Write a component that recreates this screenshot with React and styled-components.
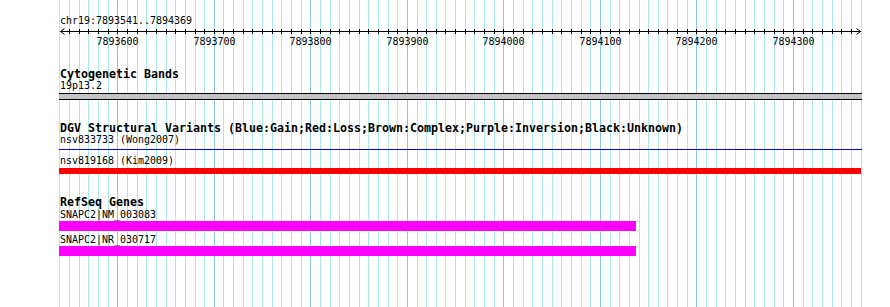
import React from 'react';
import styled, { createGlobalStyle } from 'styled-components';

const GlobalStyle = createGlobalStyle`
  html, body { margin: 0; padding: 0; background: #ffffff; }
  body { font-family: "DejaVu Sans Mono", "Liberation Mono", monospace; }
`;

const START = 7893540;
const STEPS = 84;
const xAt = (i) => Math.round(59.4 + i * 9.652);

const Panel = styled.div`
  position: relative;
  width: 890px;
  height: 307px;
  overflow: hidden;
  background: #ffffff;
  color: #000000;
`;

const GridLayer = styled.svg`
  position: absolute;
  left: 0;
  top: 0;
  width: 890px;
  height: 307px;
  z-index: 0;
`;

const Content = styled.div`
  position: relative;
  z-index: 1;
  display: flex;
  flex-direction: column;
  padding-top: 15px;
`;

const ChrLabel = styled.div`
  font-size: 9.97px;
  line-height: 12px;
  height: 12px;
  padding-left: 60px;
  white-space: pre;
`;

const RulerSvg = styled.svg`
  display: block;
  width: 890px;
  height: 19px;
  font-family: "DejaVu Sans Mono", "Liberation Mono", monospace;
  font-size: 9.97px;
`;

const TrackList = styled.div`
  display: flex;
  flex-direction: column;
  padding-left: 59px;
`;

const Track = styled.section`
  display: flex;
  flex-direction: column;
  margin-top: 22px;
`;

const TrackTitle = styled.div`
  font-weight: bold;
  font-size: 11.63px;
  line-height: 12px;
  height: 12px;
  padding-left: 1px;
  white-space: pre;
`;

const Feature = styled.div`
  display: flex;
  flex-direction: column;
  margin-top: ${(p) => p.$mt}px;
`;

const FeatureLabel = styled.div`
  position: relative;
  z-index: 2;
  font-size: 9.97px;
  line-height: 12px;
  height: 12px;
  padding-left: 1px;
  white-space: pre;
`;

const Bar = styled.div`
  box-sizing: border-box;
  height: ${(p) => p.$h}px;
  margin-top: ${(p) => p.$gap}px;
  background: ${(p) => p.$color};
  border-top: ${(p) => (p.$outline ? '1px solid #000' : 'none')};
  border-bottom: ${(p) => (p.$outline ? '1px solid #000' : 'none')};
`;

const tracks = [
  {
    title: 'Cytogenetic Bands',
    features: [
      { label: '19p13.2', color: '#c6c3c6', h: 7, w: 803, outline: true, mt: 0, gap: 1 },
    ],
  },
  {
    title:
      'DGV Structural Variants (Blue:Gain;Red:Loss;Brown:Complex;Purple:Inversion;Black:Unknown)',
    features: [
      { label: 'nsv833733 (Wong2007)', color: '#0000cc', h: 1, w: 803, mt: 0, gap: 3 },
      { label: 'nsv819168 (Kim2009)', color: '#ff0000', h: 6, w: 802, mt: 5, gap: 1 },
    ],
  },
  {
    title: 'RefSeq Genes',
    features: [
      { label: 'SNAPC2|NM_003083', color: '#ff00ff', h: 10, w: 577, mt: 1, gap: 0 },
      { label: 'SNAPC2|NR_030717', color: '#ff00ff', h: 10, w: 577, mt: 3, gap: 0 },
    ],
  },
];

function Grid() {
  const lines = [];
  for (let i = 0; i < STEPS; i++) {
    const pos = START + i * 10;
    const major = pos % 100 === 0;
    lines.push(
      <rect
        key={i}
        x={xAt(i)}
        y={0}
        width={1}
        height={307}
        fill={major ? '#87c7ea' : '#a9e9ef'}
      />
    );
  }
  return (
    <GridLayer viewBox="0 0 890 307" shapeRendering="crispEdges">
      {lines}
    </GridLayer>
  );
}

function Ruler() {
  const ticks = [];
  const labels = [];
  for (let i = 1; i < STEPS - 1; i++) {
    const pos = START + i * 10;
    const x = xAt(i);
    ticks.push(<rect key={i} x={x} y={2} width={1} height={5} fill="#000" />);
    if (pos % 100 === 0) {
      labels.push(
        <text key={`l${i}`} x={x + 0.5} y={17.5} textAnchor="middle" fill="#000">
          {pos}
        </text>
      );
    }
  }
  return (
    <RulerSvg viewBox="0 0 890 19">
      <g shapeRendering="crispEdges">
        <rect x={60} y={4} width={801} height={1} fill="#000" />
        {ticks}
      </g>
      <polyline points="64.5,1.5 60.5,4.5 64.5,7.5" fill="none" stroke="#000" strokeWidth="1" />
      <polyline points="856.5,1.5 860.5,4.5 856.5,7.5" fill="none" stroke="#000" strokeWidth="1" />
      {labels}
    </RulerSvg>
  );
}

export default function App() {
  return (
    <>
      <GlobalStyle />
      <Panel>
        <Grid />
        <Content>
          <ChrLabel>chr19:7893541..7894369</ChrLabel>
          <Ruler />
          <TrackList>
            {tracks.map((t) => (
              <Track key={t.title}>
                <TrackTitle>{t.title}</TrackTitle>
                {t.features.map((f) => (
                  <Feature key={f.label} $mt={f.mt}>
                    <FeatureLabel>{f.label}</FeatureLabel>
                    <Bar
                      $h={f.h}
                      $gap={f.gap}
                      $color={f.color}
                      $outline={f.outline}
                      style={{ width: f.w }}
                    />
                  </Feature>
                ))}
              </Track>
            ))}
          </TrackList>
        </Content>
      </Panel>
    </>
  );
}
